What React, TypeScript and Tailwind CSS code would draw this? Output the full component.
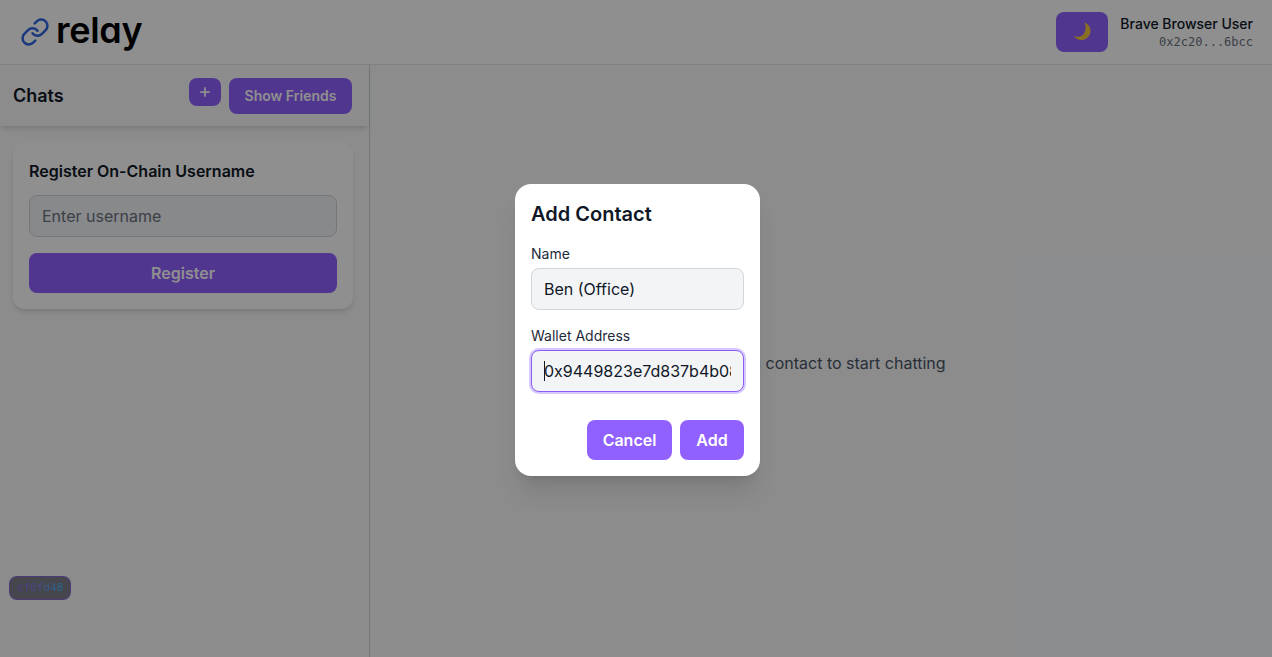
import { Plus } from 'lucide-react';

const font = { sans: "font-['Inter',sans-serif]", mono: "font-['DejaVu_Sans_Mono',monospace]" };

function LinkIcon() {
  return (
    <svg width="30" height="30" viewBox="0 0 24 24" fill="none" stroke="#2f64e0" strokeWidth="2" strokeLinecap="round" strokeLinejoin="round">
      <path d="M10 13a5 5 0 0 0 7.54.54l3-3a5 5 0 0 0-7.07-7.07l-1.72 1.71" />
      <path d="M14 11a5 5 0 0 0-7.54-.54l-3 3a5 5 0 0 0 7.07 7.07l1.71-1.71" />
    </svg>
  );
}

function Moon() {
  return (
    <svg width="22" height="22" viewBox="0 0 22 22">
      <path d="M13.5 1.5c4.6 1.6 6.9 6 5.8 10.4-1.1 4.5-5.7 7.7-10.3 7-2.6-.4-4.8-1.7-6.3-3.9 3 1.4 6.6 1 9.1-1.2 2.8-2.5 3.7-8 1.7-12.3z" fill="#f5c542" />
    </svg>
  );
}

export default function App() {
  return (
    <div className={`relative h-[657px] w-full overflow-hidden bg-gray-50 text-gray-900 ${font.sans}`}>
      {/* Top bar */}
      <header className="flex h-[65px] items-center justify-between border-b border-gray-200 bg-white pl-5 pr-[19px]">
        <div className="flex items-center gap-[6px]">
          <LinkIcon />
          <span className="-mt-[5px] text-[36px] font-semibold leading-none tracking-[-0.3px] text-black [font-feature-settings:'cv11']">relay</span>
        </div>
        <div className="flex items-center gap-3">
          <button className="flex h-10 w-[52px] items-center justify-center rounded-lg bg-[#9061ff]">
            <Moon />
          </button>
          <div className="text-right">
            <div className="text-[14px] font-medium leading-5">Brave Browser User</div>
            <div className={`text-[12px] leading-4 text-gray-500 ${font.mono}`}>0x2c20...6bcc</div>
          </div>
        </div>
      </header>

      <div className="flex h-[592px]">
        {/* Sidebar */}
        <aside className="relative w-[370px] shrink-0 border-r border-gray-300">
          <div className="flex h-[61px] items-center justify-between pl-[13px] pr-[17px] shadow-md">
            <h2 className="text-[18px] font-semibold">Chats</h2>
            <div className="flex items-start gap-2">
              <button className="flex h-7 w-8 items-center justify-center rounded-lg bg-[#9061ff] text-white">
                <Plus size={14} strokeWidth={3} />
              </button>
              <button className="h-9 w-[123px] rounded-lg bg-[#9061ff] text-[14px] font-semibold text-white">Show Friends</button>
            </div>
          </div>

          <div className="mx-[13px] mt-[17px] w-[340px] rounded-xl bg-white p-4 shadow-md">
            <h3 className="mb-3 text-[16px] font-semibold leading-6">Register On-Chain Username</h3>
            <div className="flex h-[42px] items-center rounded-lg border border-gray-300 bg-gray-100 px-3 text-[16px] text-gray-500">Enter username</div>
            <button className="mt-4 h-10 w-full rounded-lg bg-[#9061ff] text-[16px] font-semibold text-white">Register</button>
          </div>

          <div className={`absolute left-[9px] top-[511px] flex h-6 w-[62px] items-center justify-center rounded-lg border border-[#9061ff]/60 bg-[#7e7e8e] text-[11px] ${font.mono}`}>
            <span className="bg-gradient-to-r from-[#8b5cf6] to-[#38bdf8] bg-clip-text text-transparent">cf0fd48</span>
          </div>
        </aside>

        {/* Empty chat */}
        <main className="flex flex-1 items-center justify-center pl-1 pt-[3px] text-[16px] text-gray-600">
          Select a contact to start chatting
        </main>
      </div>

      {/* Modal overlay */}
      <div className="absolute inset-0 flex items-center justify-center bg-black/44 pl-[3px] pt-[3px]">
        <div className="w-[245px] rounded-2xl bg-white p-4 shadow-xl">
          <h2 className="mb-4 text-[20px] font-semibold leading-7">Add Contact</h2>
          <label className="mb-1 block text-[14px] font-normal leading-5 text-gray-800">Name</label>
          <input
            readOnly
            value="Ben (Office)"
            className="mb-4 h-[42px] w-full rounded-lg border border-gray-300 bg-gray-100 px-3 text-[16px] text-gray-900 outline-none"
          />
          <label className="mb-1 block text-[14px] font-normal leading-5 text-gray-800">Wallet Address</label>
          <div className="relative">
            <input
              readOnly
              value="0x9449823e7d837b4b08a1f3c2"
              className="h-[42px] w-full rounded-lg border border-[#8b5cf6] bg-gray-100 px-3 text-[16px] text-gray-900 outline-none ring-2 ring-[#d6c8ff]"
            />
            <span className="absolute left-[13px] top-[11px] h-5 w-px bg-gray-900" />
          </div>
          <div className="mt-7 flex justify-end gap-2">
            <button className="h-10 w-[85px] rounded-lg bg-[#9061ff] text-[16px] font-semibold text-white">Cancel</button>
            <button className="h-10 w-16 rounded-lg bg-[#9061ff] text-[16px] font-semibold text-white">Add</button>
          </div>
        </div>
      </div>
    </div>
  );
}
